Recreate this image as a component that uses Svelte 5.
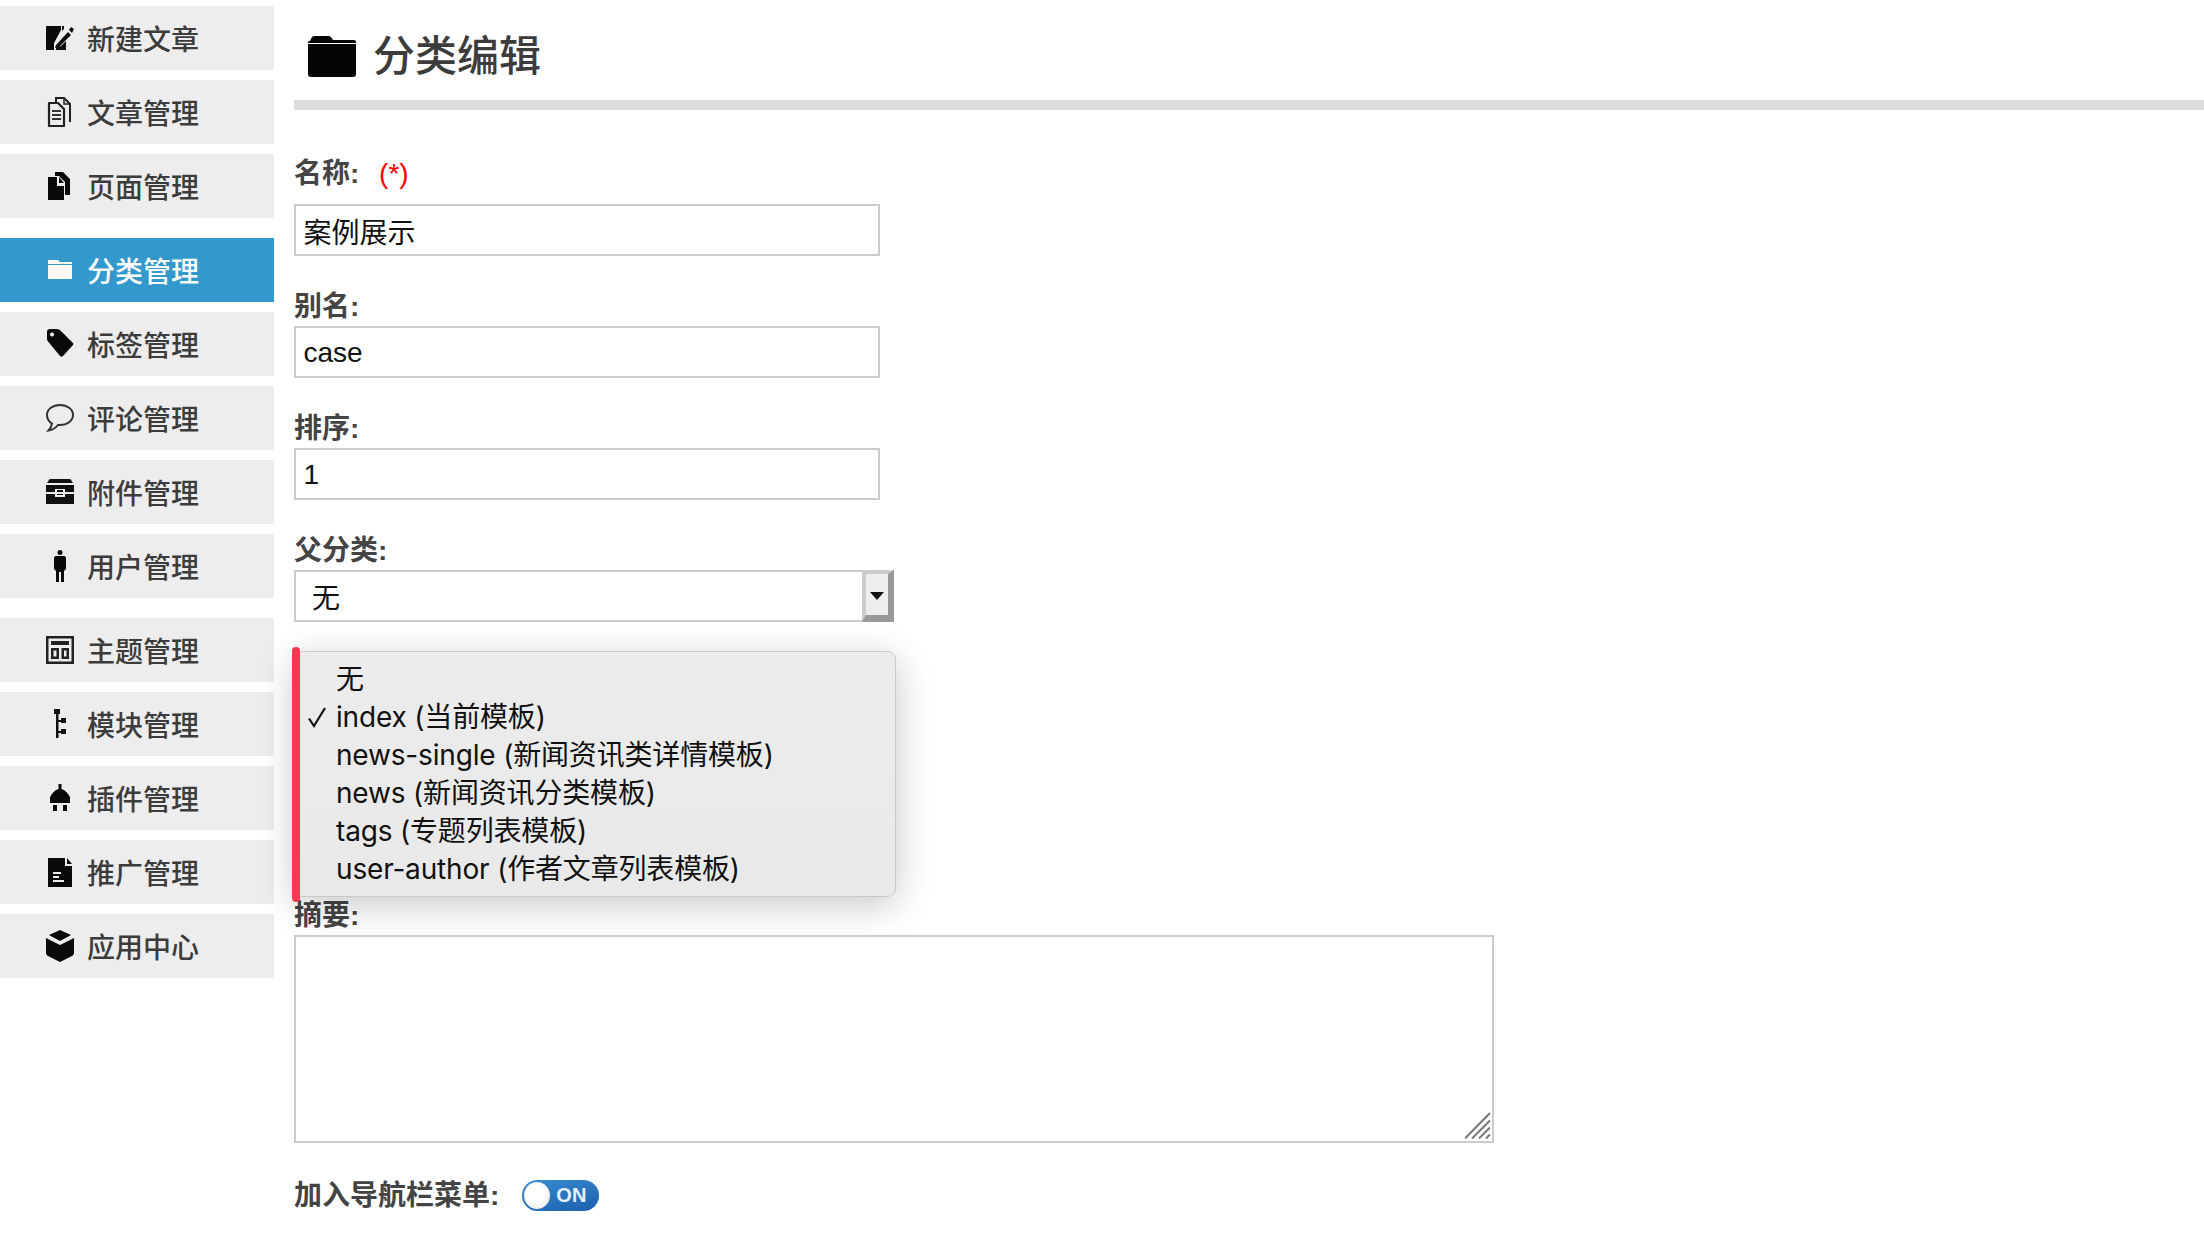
<script>
  const menu = ['无', 'index (当前模板)', 'news-single (新闻资讯类详情模板)', 'news (新闻资讯分类模板)', 'tags (专题列表模板)', 'user-author (作者文章列表模板)'];
</script>

{#snippet navItem(label, cls = '', icon)}
  <a class="item {cls}" href="#top">
    <svg class="ico" viewBox="0 0 28 32" aria-hidden="true">{@render icon()}</svg>
    <span>{label}</span>
  </a>
{/snippet}

{#snippet iNew()}
  <path d="M0 4H15V8L8 21V28H0Z" fill="#0a0a0a"/>
  <path d="M18 4V7L16 9V4ZM10 28V25L15 24 20 19V28Z" fill="#111"/>
  <path d="M10 23L22 10 25 13 13 25 9 26Z" fill="#111"/>
  <path d="M23 8L25 5 28 7 26 11Z" fill="#111"/>
{/snippet}
{#snippet iDoc()}
  <path d="M10 6V2H18L24 8V26" fill="none" stroke="#222" stroke-width="2"/>
  <path d="M18 2V8H24" fill="none" stroke="#222" stroke-width="1.500"/>
  <path d="M3 7H12L18 13V30H3Z" fill="none" stroke="#222" stroke-width="2.200" stroke-linejoin="round"/>
  <path d="M6 15H15M6 19H15M6 23H15" stroke="#333" stroke-width="2"/>
{/snippet}
{#snippet iPages()}
  <path d="M9 2H17L24 9V25H19V12L13 6H9Z" fill="#0a0a0a"/>
  <path d="M2 7H11V16H18V30H2Z" fill="#0a0a0a"/>
  <path d="M13 7L18 13H13Z" fill="#0a0a0a"/>
{/snippet}
{#snippet iFolder()}
  <path d="M2 7Q2 6 3 6H12L14 8H25Q26 8 26 9V10H2Z" fill="#fbf8f5"/>
  <path d="M2 11H26V24Q26 25 25 25H3Q2 25 2 24Z" fill="#fbf8f5"/>
{/snippet}
{#snippet iTag()}
  <path d="M1 4Q1 1 4 1H11Q13 1 14.500 2.500L27 15Q28 16 27 17L17 28Q15.500 29.500 14 28L2.500 14Q1 12.500 1 11ZM6 4.500A2 2 0 1 0 6.100 4.500Z" fill="#0a0a0a" fill-rule="evenodd"/>
{/snippet}
{#snippet iComment()}
  <path d="M14 3C7 3 1 7 1 13C1 17 3.500 20 6 21.500C5.500 24 4 27 2.500 28.500C6 28 10 25.500 12 23H14C21 23 27 19 27 13C27 7 21 3 14 3Z" fill="none" stroke="#333" stroke-width="2"/>
{/snippet}
{#snippet iArchive()}
  <path d="M3 4Q3 3 5 3H23Q25 3 25 4L27 7H1Z" fill="#111"/>
  <path d="M0 9H28V16H19V13H9V16H0ZM11 14H17V16H11Z" fill="#111"/>
  <path d="M0 18H9V21H19V18H28V28H0ZM11 18V19H17V18Z" fill="#111"/>
{/snippet}
{#snippet iUser()}
  <circle cx="14" cy="2.500" r="2.500" fill="#0a0a0a"/>
  <path d="M10 6H18Q20 6 20 9V19L18 21V32H15V22H13V32H10V21L8 19V9Q8 6 10 6Z" fill="#0a0a0a"/>
{/snippet}
{#snippet iTheme()}
  <path d="M0 2H28V30H0ZM2.500 4.500V27.500H25.500V4.500ZM5 7H23V11H5ZM5 14H13V25H5ZM7.500 16.500V22.500H10.500V16.500ZM15.500 14H23V25H15.500ZM18 16.500V22.500H20.500V16.500Z" fill="#222" fill-rule="evenodd"/>
{/snippet}
{#snippet iTree()}
  <path d="M8 1H14V6H12.500V12H15V10H20V15H15V14H12.500V23H15V21H20V26H15V25H12.500V30H10V6H8Z" fill="#111"/>
{/snippet}
{#snippet iPlug()}
  <path d="M12.500 2H15.500V7C19 8 22 11 24 15V21H4V15C6 11 9 8 12.500 7Z" fill="#0a0a0a"/>
  <path d="M7 23H11V29H7ZM17 23H21V29H17Z" fill="#0a0a0a"/>
{/snippet}
{#snippet iFile()}
  <path d="M2 2H19V10H26V31H2ZM21 2L26 8H21ZM7 16H15V18H7ZM7 20H13V22H7ZM7 24H18V26H7Z" fill="#0a0a0a" fill-rule="evenodd"/>
{/snippet}
{#snippet iBox()}
  <path d="M14 0L25 5 14 11 3 5Z" fill="#0a0a0a"/>
  <path d="M0 8L14 15 28 8V23Q28 25 26 26L14 32 2 26Q0 25 0 23Z" fill="#0a0a0a"/>
{/snippet}

<div class="page" id="top">
  <nav class="side">
    {@render navItem('新建文章', '', iNew)}
    {@render navItem('文章管理', '', iDoc)}
    {@render navItem('页面管理', '', iPages)}
    {@render navItem('分类管理', 'active sep', iFolder)}
    {@render navItem('标签管理', '', iTag)}
    {@render navItem('评论管理', '', iComment)}
    {@render navItem('附件管理', '', iArchive)}
    {@render navItem('用户管理', '', iUser)}
    {@render navItem('主题管理', 'sep', iTheme)}
    {@render navItem('模块管理', '', iTree)}
    {@render navItem('插件管理', '', iPlug)}
    {@render navItem('推广管理', '', iFile)}
    {@render navItem('应用中心', '', iBox)}
  </nav>

  <main class="main">
    <h2 class="title">
      <svg class="title-ico" viewBox="0 0 48 41" aria-hidden="true">
        <path d="M0 8V38Q0 41 3 41H45Q48 41 48 38V8Z" fill="#050505"/>
        <path d="M2 5L4 1Q5 0 7 0H20Q22 0 23 1L25 4H46Q48 4 48 6V7H0V6Q0 5 2 5Z" fill="#050505"/>
      </svg>
      <span>分类编辑</span>
    </h2>

    <div class="field first">
      <div class="label">名称: <em>(*)</em></div>
      <input class="input" value="案例展示" />
    </div>
    <div class="field">
      <div class="label">别名:</div>
      <input class="input" value="case" />
    </div>
    <div class="field">
      <div class="label">排序:</div>
      <input class="input" value="1" />
    </div>
    <div class="field">
      <div class="label">父分类:</div>
      <div class="select">
        <span class="sel-text">无</span>
        <span class="sel-btn"><i class="arrow"></i></span>
      </div>
    </div>

    <div class="overlay-slot">
      <div class="dotted"></div>
      <div class="menu">
        <div class="redbar"></div>
        {#each menu as m, i}
          <div class="opt">
            {#if i === 1}
              <svg class="check" viewBox="0 0 20 24" aria-hidden="true"><path d="M2 13.500L7 21 18 3" fill="none" stroke="#111" stroke-width="2.200"/></svg>
            {/if}
            {m}
          </div>
        {/each}
      </div>
    </div>

    <div class="label">摘要:</div>
    <div class="ta-wrap">
      <textarea class="ta"></textarea>
      <svg class="grip" viewBox="0 0 26 27" aria-hidden="true">
        <path d="M0 26.500L25 1M7 26.500L25 8.500M14 26.500L25 15.500M21 26.500L25 22.500" stroke="#777" stroke-width="2" fill="none"/>
      </svg>
    </div>

    <div class="toggle-row">
      <div class="label">加入导航栏菜单:</div>
      <div class="toggle"><span class="knob"></span><span class="on">ON</span></div>
    </div>
  </main>
</div>

<style>
  :global(body) { margin: 0; background: #fff; }
  .page {
    display: flex;
    width: 2204px;
    height: 1238px;
    overflow: hidden;
    font-family: "Liberation Sans", "Noto Sans CJK SC", sans-serif;
    color: #444;
  }
  .side {
    flex: 0 0 274px;
    display: flex;
    flex-direction: column;
    gap: 10px;
    padding-top: 6px;
  }
  .item {
    height: 64px;
    display: flex;
    align-items: center;
    gap: 13px;
    padding-left: 46px;
    background: #ededed;
    color: #3c3c3c;
    font-size: 28px;
    font-weight: 500;
    line-height: 1;
    text-decoration: none;
  }
  .item span { position: relative; top: 3px; }
  .item.sep { margin-top: 10px; }
  .item.active { background: #3399cc; color: #fff; }
  .ico { width: 28px; height: 32px; flex: none; }
  .main { flex: 1; padding-left: 20px; min-width: 0; }
  .title {
    box-sizing: border-box;
    height: 110px;
    margin: 0;
    padding: 13px 0 0 14px;
    display: flex;
    align-items: center;
    gap: 17px;
    border-bottom: 10px solid #dedede;
    font-size: 42px;
    font-weight: 500;
    color: #3c3c3c;
    line-height: 1;
  }
  .title-ico { width: 48px; height: 41px; flex: none; }
  .label {
    height: 40px;
    line-height: 42px;
    font-size: 28px;
    font-weight: 700;
    color: #444;
  }
  .label em { font-style: normal; font-weight: 400; color: #f00; margin-left: 12px; }
  .field { margin-top: 30px; }
  .field.first { margin-top: 43px; }
  .field.first .label { margin-bottom: 11px; }
  .input {
    display: block;
    box-sizing: border-box;
    width: 586px;
    height: 52px;
    padding: 1px 8px 0 7.500px;
    border: 2px solid #ccc;
    border-radius: 0;
    outline: none;
    background: #fff;
    color: #111;
    font: 28px "Liberation Sans", "Noto Sans CJK SC", sans-serif;
  }
  .select {
    box-sizing: border-box;
    width: 600px;
    height: 52px;
    display: flex;
    border: 2px solid #ccc;
    color: #111;
    font-size: 28px;
    line-height: 54px;
  }
  .sel-text { flex: 1; padding-left: 16px; }
  .sel-btn {
    box-sizing: border-box;
    width: 32px;
    margin: -2px -2px -2px 0;
    flex: none;
    display: flex;
    align-items: flex-start;
    justify-content: center;
    background: #eee;
    border-style: solid;
    border-width: 4px 6px 7px 4px;
    border-color: #ccc #999 #999 #ccc;
  }
  .arrow {
    margin-top: 18px;
    width: 0;
    height: 0;
    border-left: 7px solid transparent;
    border-right: 7px solid transparent;
    border-top: 8px solid #111;
  }
  .overlay-slot { position: relative; height: 273px; width: 600px; }
  .dotted {
    position: absolute;
    left: 600px;
    top: 70px;
    width: 2px;
    height: 54px;
    background: repeating-linear-gradient(180deg, #555 0 2px, transparent 2px 3.6px);
  }
  .menu {
    position: absolute;
    left: 0;
    top: 29px;
    box-sizing: border-box;
    width: 602px;
    height: 246px;
    padding: 8px 0;
    background: linear-gradient(180deg, #ececec, #e9e9e9);
    border: 1px solid #c9c9c9;
    border-radius: 8px;
    box-shadow: 0 8px 36px rgba(0, 0, 0, 0.22);
    color: #111;
    font-family: Inter, "Noto Sans CJK SC", sans-serif;
    font-size: 28px;
    letter-spacing: -0.17px;
  }
  .redbar {
    position: absolute;
    left: -3px;
    top: -5px;
    bottom: -6px;
    width: 8px;
    border-radius: 4px;
    background: #f9374e;
  }
  .opt {
    position: relative;
    height: 38px;
    line-height: 38px;
    padding-left: 41px;
    white-space: nowrap;
  }
  .check { position: absolute; left: 12px; top: 7px; width: 20px; height: 24px; }
  .ta-wrap { position: relative; width: 1200px; height: 208px; }
  .ta {
    display: block;
    box-sizing: border-box;
    width: 100%;
    height: 100%;
    border: 2px solid #ccc;
    outline: none;
    resize: none;
    background: #fff;
    padding: 0;
  }
  .grip { position: absolute; right: 3px; bottom: 4px; width: 26px; height: 27px; }
  .toggle-row { display: flex; align-items: center; gap: 23px; margin-top: 32px; }
  .toggle {
    box-sizing: border-box;
    width: 77px;
    height: 31px;
    padding: 2px;
    display: flex;
    align-items: center;
    gap: 6px;
    border-radius: 16px;
    background: linear-gradient(165deg, #3a8cd2, #1b5fae);
  }
  .knob {
    width: 26px;
    height: 27px;
    flex: none;
    border-radius: 50%;
    background: radial-gradient(circle at 45% 45%, #fff 40%, #e0e0e0 100%);
  }
  .on { color: #e6f0fa; font-size: 20px; font-weight: 700; line-height: 1; }
</style>
